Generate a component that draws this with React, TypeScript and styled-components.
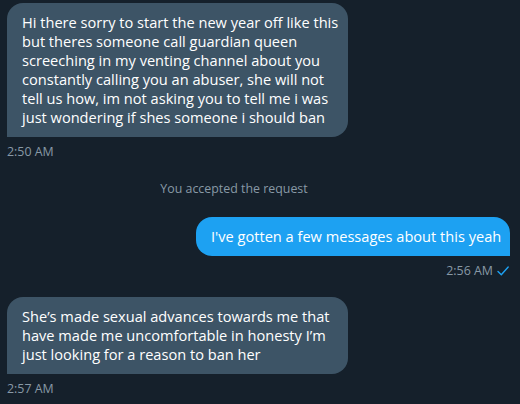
import React from "react";
import styled, { createGlobalStyle } from "styled-components";

const Global = createGlobalStyle`
  html, body { margin: 0; padding: 0; background: #15202b; }
  body { font-family: "Open Sans", "Segoe UI", "Noto Sans", sans-serif; -webkit-font-smoothing: antialiased; }
`;

const Page = styled.div`
  width: 520px;
  height: 404px;
  box-sizing: border-box;
  padding: 3px 10px 0 7px;
  display: flex;
  flex-direction: column;
  overflow: hidden;
`;

const Group = styled.div<{ $mine?: boolean; $mb: number }>`
  display: flex;
  flex-direction: column;
  align-items: ${(p) => (p.$mine ? "flex-end" : "flex-start")};
  margin-bottom: ${(p) => p.$mb}px;
`;

const Bubble = styled.div<{ $mine?: boolean; $w: number }>`
  box-sizing: border-box;
  width: ${(p) => p.$w}px;
  padding: 10px 15px;
  font-size: 14.6px;
  line-height: 19px;
  color: #fff;
  background: ${(p) => (p.$mine ? "#1da1f2" : "#3d5466")};
  border-radius: ${(p) => (p.$mine ? "16px 16px 0 16px" : "16px 16px 16px 0")};
  white-space: nowrap;
`;

const Meta = styled.div`
  margin-top: 7px;
  font-size: 12.4px;
  line-height: 16px;
  color: #8899a6;
  display: flex;
  align-items: center;
  gap: 3px;
`;

const System = styled.div`
  text-align: center;
  font-size: 12.4px;
  line-height: 16px;
  color: #8899a6;
  padding-right: 49px;
  margin-bottom: 20px;
`;

const Check = () => (
  <svg width="14" height="14" viewBox="0 0 14 14" fill="none">
    <path d="M2 7.5 L5.3 10.8 L12.2 3" stroke="#1da1f2" strokeWidth="1.4" strokeLinecap="round" strokeLinejoin="round" />
  </svg>
);

const lines1 = [
  "Hi there sorry to start the new year off like this",
  "but theres someone call guardian queen",
  "screeching in my venting channel about you",
  "constantly calling you an abuser, she will not",
  "tell us how, im not asking you to tell me i was",
  "just wondering if shes someone i should ban",
];

const lines3 = [
  "She\u2019s made sexual advances towards me that",
  "have made me uncomfortable in honesty I\u2019m",
  "just looking for a reason to ban her",
];

const Lines = ({ lines }: { lines: string[] }) => (
  <>
    {lines.map((l, i) => (
      <div key={i}>{l}</div>
    ))}
  </>
);

export default function App() {
  return (
    <>
      <Global />
      <Page>
        <Group $mb={21}>
          <Bubble $w={341}>
            <Lines lines={lines1} />
          </Bubble>
          <Meta>2:50 AM</Meta>
        </Group>
        <System>You accepted the request</System>
        <Group $mine $mb={18}>
          <Bubble $mine $w={314}>I've gotten a few messages about this yeah</Bubble>
          <Meta>
            2:56 AM <Check />
          </Meta>
        </Group>
        <Group $mb={0}>
          <Bubble $w={341}>
            <Lines lines={lines3} />
          </Bubble>
          <Meta>2:57 AM</Meta>
        </Group>
      </Page>
    </>
  );
}
